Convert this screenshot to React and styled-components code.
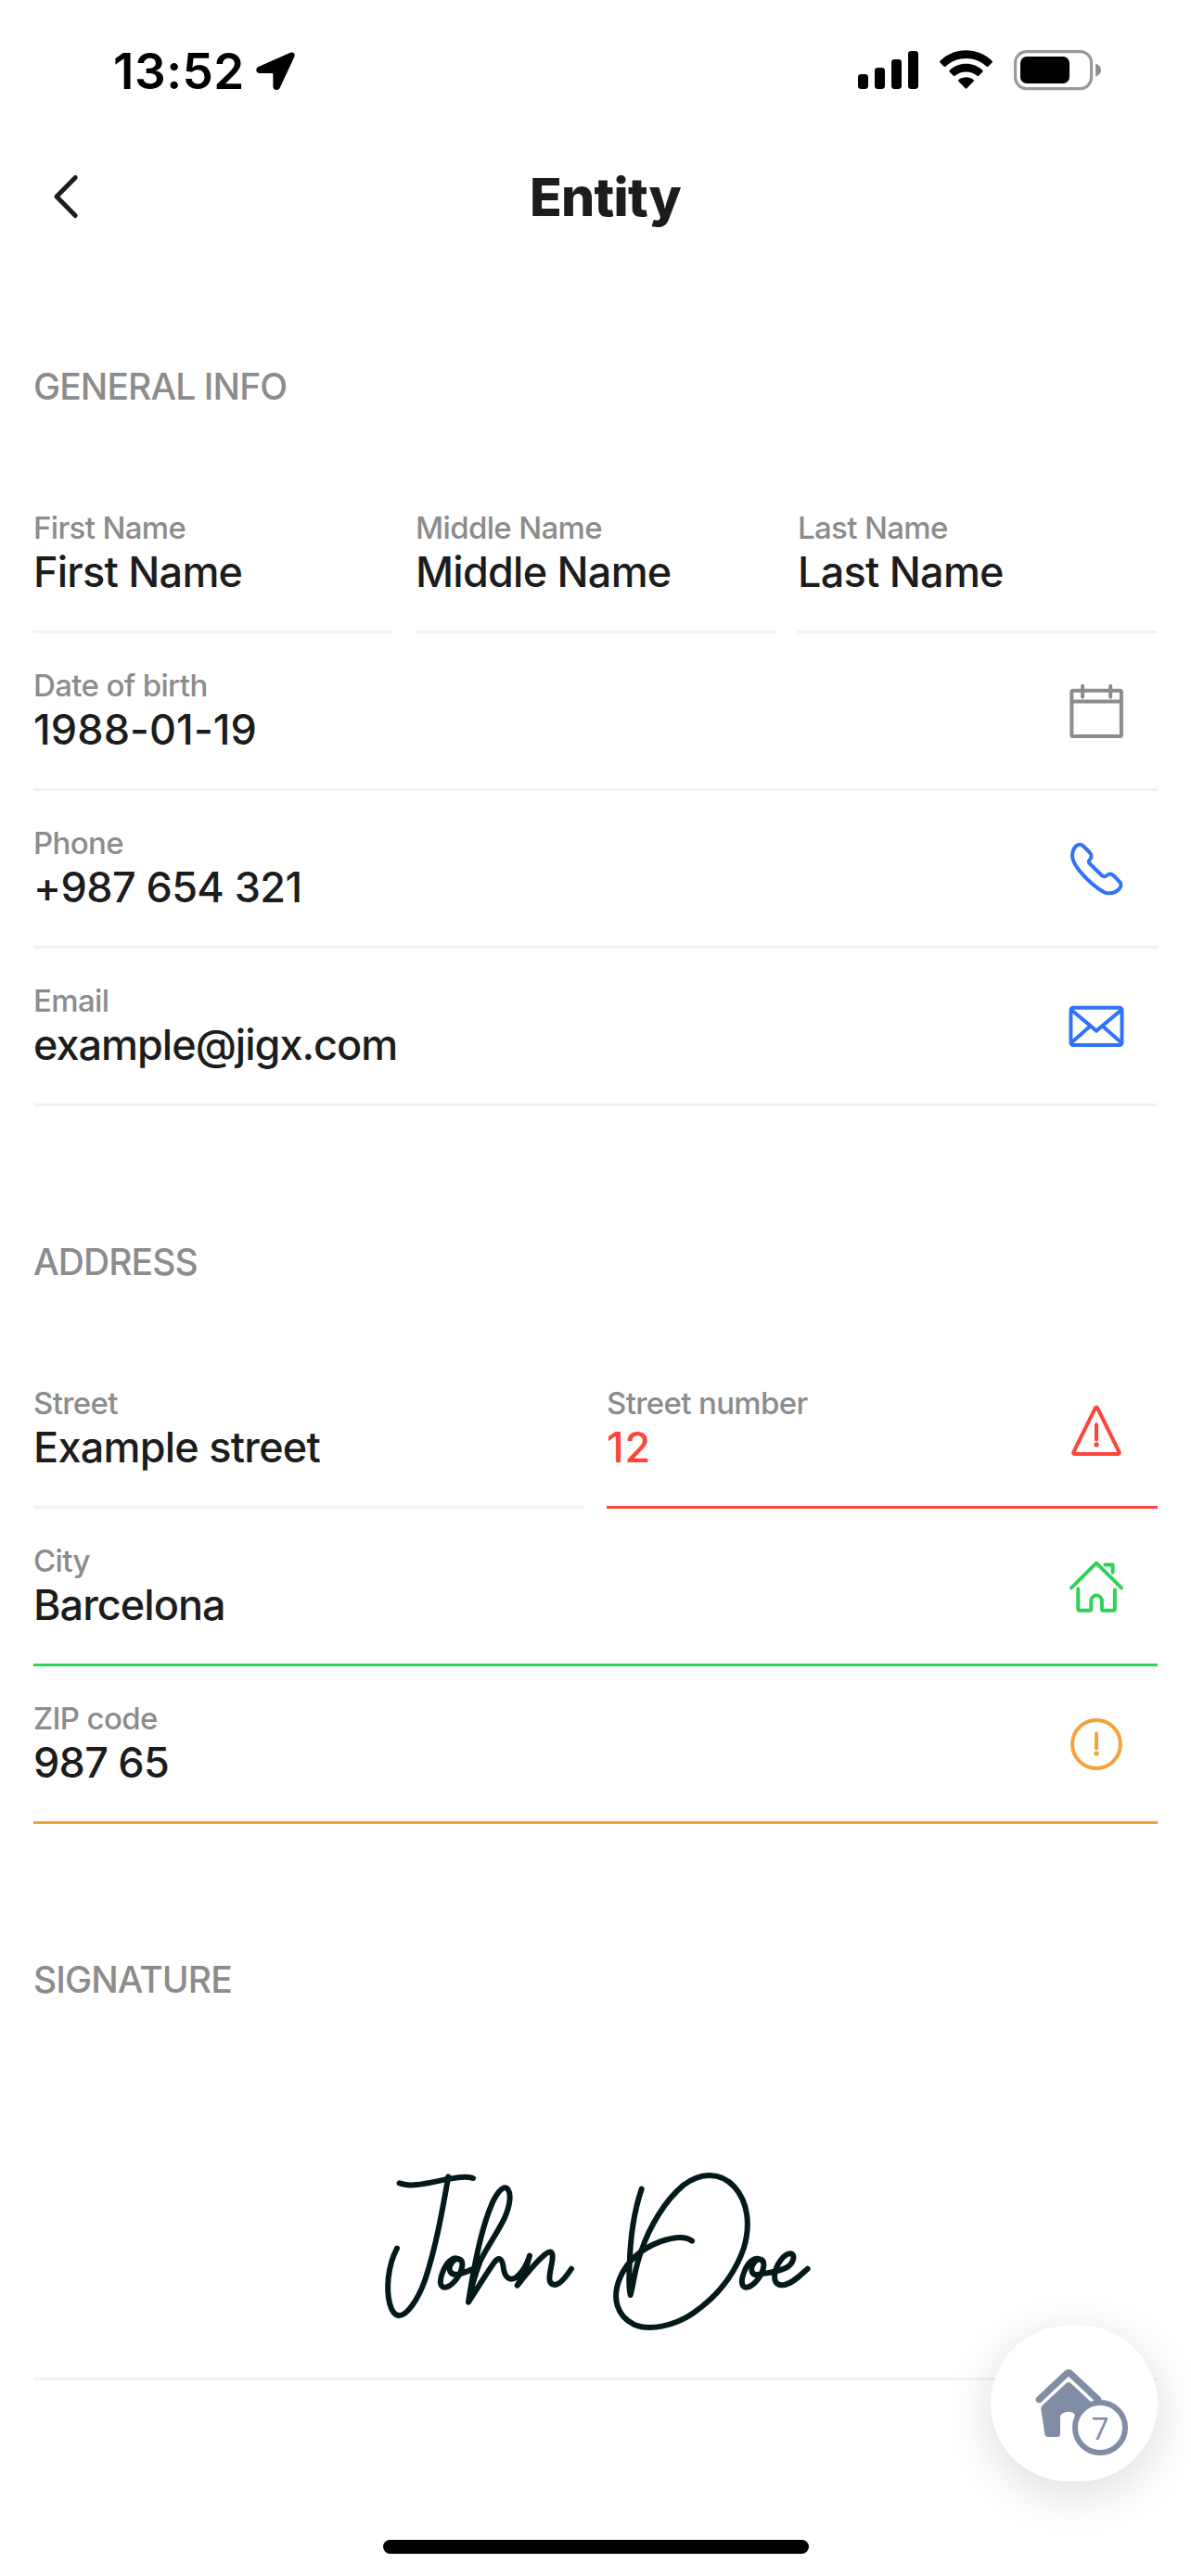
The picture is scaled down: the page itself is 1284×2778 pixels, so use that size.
import React from 'react';
import styled, { createGlobalStyle } from 'styled-components';

const color = {
  ink: '#1c1c1c',
  muted: '#8c8c8c',
  line: '#f2f2f2',
  blue: '#3173f6',
  red: '#ff453a',
  green: '#30d158',
  orange: '#f2a33a',
  slate: '#7f8da5',
  signature: '#04191a',
};

const GlobalStyle = createGlobalStyle`
  body {
    margin: 0;
    background: #fff;
  }
`;

const Screen = styled.div`
  position: relative;
  display: flex;
  flex-direction: column;
  width: 1284px;
  height: 2778px;
  overflow: hidden;
  background: #fff;
  color: ${color.ink};
  font-family: Inter, 'Liberation Sans', sans-serif;
`;

const StatusBar = styled.header`
  display: flex;
  justify-content: space-between;
  height: 141px;
  box-sizing: border-box;
  padding: 45px 96px 0 122px;
  color: #000;
`;

const StatusLeft = styled.div`
  display: flex;
  gap: 11px;
`;

const Time = styled.span`
  width: 143px;
  font-size: 53px;
  line-height: 64px;
  font-weight: 600;
  letter-spacing: 0.5px;
  white-space: nowrap;
`;

const StatusRight = styled.div`
  display: flex;
  gap: 23px;
  padding-top: 9px;
`;

const Glyph = styled.svg`
  display: block;
  flex: none;
  overflow: visible;
`;

const ArrowSlot = styled.div`
  padding-top: 11px;
`;

const NavBar = styled.nav`
  display: grid;
  grid-template-columns: 107px 1fr 86px;
  align-items: center;
  height: 143px;
`;

const BackButton = styled.button`
  display: flex;
  align-items: center;
  height: 100%;
  padding: 0 0 1px 57px;
  border: 0;
  background: none;
`;

const Title = styled.h1`
  margin: 0;
  text-align: center;
  font-size: 57px;
  line-height: 69px;
  font-weight: 800;
  letter-spacing: -0.7px;
`;

const Content = styled.main`
  display: flex;
  flex-direction: column;
  gap: 144px;
  padding: 109px 36px 0;
`;

const Section = styled.section`
  display: flex;
  flex-direction: column;
`;

const SectionTitle = styled.h2`
  margin: 0 0 72px;
  font-size: 39px;
  line-height: 48px;
  font-weight: 450;
  letter-spacing: -0.9px;
  color: ${color.muted};
`;

const Row = styled.div`
  display: grid;
  grid-template-columns: repeat(${(p) => p.$columns || 1}, 1fr);
  column-gap: 24px;
`;

const FieldBox = styled.div`
  display: flex;
  justify-content: space-between;
  height: 170px;
  box-sizing: border-box;
  padding: 36px 36px 0 0;
  border-bottom: 3px solid ${(p) => p.$line || color.line};
`;

const FieldText = styled.div`
  display: flex;
  flex-direction: column;
`;

const Label = styled.span`
  font-size: 33px;
  line-height: 40px;
  font-weight: 450;
  letter-spacing: -0.65px;
  color: ${color.muted};
  white-space: nowrap;
`;

const Value = styled.span`
  font-size: 45px;
  line-height: 55px;
  font-weight: 470;
  letter-spacing: ${(p) => p.$tracking || '-0.75px'};
  color: ${(p) => p.$color || color.ink};
  white-space: nowrap;
`;

const IconSlot = styled.div`
  width: 60px;
  height: 60px;
  padding-top: 17px;
  color: ${(p) => p.$color};
`;

const SignatureBox = styled.div`
  display: flex;
  justify-content: center;
  height: 336px;
  box-sizing: border-box;
  padding: 79px 4px 0 0;
  border-bottom: 3px solid ${color.line};
`;

const HomeButton = styled.button`
  position: absolute;
  left: 1068px;
  top: 2508px;
  width: 180px;
  height: 168px;
  padding: 0;
  border: 0;
  border-radius: 84px;
  background: #fff;
  box-shadow: 0 12px 54px rgba(0, 0, 0, 0.14);
`;

const HomeGlyph = styled(Glyph)`
  position: absolute;
  left: 0;
  top: 0;
`;

const Badge = styled.span`
  position: absolute;
  left: 88px;
  top: 80px;
  display: flex;
  align-items: center;
  justify-content: center;
  width: 60px;
  height: 60px;
  box-sizing: border-box;
  border: 6px solid ${color.slate};
  border-radius: 50%;
  background: #fff;
  color: ${color.slate};
  font-family: 'Open Sans', 'Noto Sans', sans-serif;
  font-size: 33.5px;
  line-height: 48px;
`;

const HomeIndicator = styled.div`
  position: absolute;
  left: 413px;
  bottom: 24px;
  width: 459px;
  height: 15px;
  border-radius: 8px;
  background: #000;
`;

function LineIcon({ children }) {
  return (
    <Glyph
      width="60"
      height="60"
      viewBox="0 0 60 60"
      fill="none"
      stroke="currentColor"
      strokeWidth="4"
      strokeLinecap="round"
      strokeLinejoin="round"
    >
      {children}
    </Glyph>
  );
}

const CalendarIcon = () => (
  <LineIcon>
    <rect x="3.4" y="8.7" width="53.5" height="49.3" rx="1.6" />
    <path d="M3.4 20.5H56.9M15.1 3.8V15.4M45.2 3.8V15.4" />
  </LineIcon>
);

const PhoneIcon = () => (
  <LineIcon>
    <path d="M4 16.7C4 11.5 5.5 9 8.5 6C10.8 4.2 13.8 4.2 16 6.5L23 13.5C25.3 16 24.6 19.3 23.2 20.7C21.6 22.3 21.6 24 23 25.5L35.5 37.8C37.5 39.6 39.8 39.4 41.4 38C43.6 36.2 46 36 48.3 38L55 44.8C57 47 57 50 54.8 52.3C51 56.5 47.5 57.5 42.5 57.2C37 57 30 51.5 20 42C9 31 4 22.5 4 16.7Z" />
  </LineIcon>
);

const MailIcon = () => (
  <LineIcon>
    <rect x="2.5" y="10.7" width="55" height="40.3" rx="2.6" />
    <path d="M3.2 13.2L30 35.6L56.8 13.2M22.6 31.2L3.2 48.2M37.4 31.2L56.8 48.2" />
  </LineIcon>
);

const WarningIcon = () => (
  <LineIcon>
    <path d="M28.9 8.3Q30 6.6 31.1 8.3L54.6 56Q55.2 57.9 53.4 57.9H6.6Q4.8 57.9 5.4 56Z" />
    <path d="M30 26.2V42.4" />
    <circle cx="30" cy="47.9" r="2.6" fill="currentColor" stroke="none" />
  </LineIcon>
);

const HouseIcon = () => (
  <LineIcon>
    <path d="M3 32.4L30 5.6L57 32.4M39.3 7.4H47.6V15.8" />
    <path d="M10.3 33.4V55Q10.3 56.7 12 56.7H22.7Q24.3 56.7 24.3 55V46.4A5.8 5.8 0 0 1 35.9 46.4V55Q35.9 56.7 37.5 56.7H48.2Q49.9 56.7 49.9 55V34.5" />
  </LineIcon>
);

const AlertCircleIcon = () => (
  <LineIcon>
    <circle cx="30" cy="31" r="25.9" />
    <path d="M30 19.4V35.6" />
    <circle cx="30" cy="41" r="2.6" fill="currentColor" stroke="none" />
  </LineIcon>
);

const LocationArrow = () => (
  <Glyph width="42" height="42" viewBox="0 0 42 42" fill="currentColor">
    <path d="M36.5 1C39.7 -0.7 42.6 1.7 41.4 5.2L25.7 38.8C24 42.4 18.4 41.5 18.4 37.2V23.9Q18.4 23 17.5 23H4.2C0 23-1.3 17.8 2.6 15.9Z" />
  </Glyph>
);

const SignalIcon = () => (
  <Glyph width="65" height="43" viewBox="0 0 65 43" fill="currentColor">
    <rect x="0" y="26" width="11" height="16" rx="3.4" />
    <rect x="18" y="19" width="11" height="23" rx="3.4" />
    <rect x="36" y="10" width="11" height="32" rx="3.4" />
    <rect x="54" y="1" width="11" height="41" rx="3.4" />
  </Glyph>
);

const WifiIcon = () => (
  <Glyph width="57" height="43" viewBox="0.5 0 57 43" fill="currentColor">
    <path d="M29 0.3C39.5 0.3 49.5 4.4 57 11.7Q57.9 12.6 57 13.5L52.8 17.7Q52 18.5 51.1 17.7C45.2 12.1 37.3 9 29 9C20.7 9 12.8 12.1 6.9 17.7Q6 18.5 5.2 17.7L1 13.5Q0.1 12.6 1 11.7C8.5 4.4 18.5 0.3 29 0.3Z" />
    <path d="M29 14.8C35.6 14.8 41.9 17.3 46.7 21.7Q47.7 22.6 46.8 23.5L42.6 27.7Q41.8 28.5 40.9 27.7C37.6 24.9 33.4 23.4 29 23.4C24.6 23.4 20.4 24.9 17.1 27.7Q16.2 28.5 15.4 27.7L11.2 23.5Q10.3 22.6 11.3 21.7C16.1 17.3 22.4 14.8 29 14.8Z" />
    <path d="M29 29.2C32 29.2 34.7 30.2 37 31.9Q38 32.7 37.1 33.7L29.8 41.3Q29 42.1 28.2 41.3L20.9 33.7Q20 32.7 21 31.9C23.3 30.2 26 29.2 29 29.2Z" />
  </Glyph>
);

const BatteryIcon = () => (
  <Glyph width="95" height="43" viewBox="0 0 95 43">
    <rect x="1.6" y="1.6" width="82" height="40" rx="12" fill="none" stroke="#999" strokeWidth="3.2" />
    <rect x="7" y="7" width="53" height="29" rx="7" fill="#000" />
    <path d="M88.2 14.5C91.5 15.7 94 18.3 94 21.6C94 24.9 91.5 27.5 88.2 28.7Z" fill="#8c8c8c" />
  </Glyph>
);

const BackChevron = () => (
  <Glyph width="28" height="50" viewBox="0 0 28 50" fill="none" stroke={color.ink} strokeWidth="5" strokeLinecap="round" strokeLinejoin="round">
    <path d="M24.2 4.5L4 25L24.2 45.5" />
  </Glyph>
);

const Signature = () => (
  <Glyph
    width="500"
    height="230"
    viewBox="0 0 1500 690"
    fill="none"
    stroke={color.signature}
    strokeWidth="18"
    strokeLinecap="round"
    strokeLinejoin="round"
    role="img"
    aria-label="John Doe"
  >
    <path d="M122 133C160 150 230 128 290 118C320 112 345 112 360 117" />
    <path d="M280 112C262 215 240 340 205 445C180 515 145 562 120 562C92 558 80 500 86 440C90 405 100 370 114 344" />
    <path d="M322 384C300 364 275 385 262 420C248 455 255 475 275 469C300 460 322 425 325 400C328 375 305 370 290 392C278 412 285 432 310 428C330 424 350 415 366 408" />
    <path d="M345 518C360 420 385 290 415 215C432 170 455 140 470 150C485 165 480 205 462 245C440 292 408 335 383 385C370 420 352 480 345 518C370 480 400 430 428 390C445 368 455 380 458 405C462 440 480 452 502 436C520 420 535 395 543 368C535 400 518 440 503 464C530 430 565 385 595 362C620 343 620 370 613 400C605 440 602 460 625 462C645 460 665 430 678 410" />
    <path d="M905 152C880 225 868 320 866 400C864 440 864 475 869 495C880 455 882 410 905 350C930 275 980 190 1040 140C1095 98 1160 95 1205 145C1250 195 1258 270 1235 345C1205 430 1150 500 1070 555C1010 595 930 612 880 590C825 562 808 505 835 440C858 385 905 345 965 322C1000 310 1045 302 1068 320" />
    <path d="M1298 386C1275 365 1250 385 1237 420C1223 455 1230 475 1250 469C1275 460 1297 425 1300 402C1302 375 1280 372 1266 394C1255 415 1262 434 1285 428C1310 424 1345 420 1370 408C1395 396 1405 365 1388 361C1365 360 1340 398 1336 425C1332 455 1345 466 1368 462C1395 456 1420 430 1442 410" />
  </Glyph>
);

function Field({ label, value, valueColor, tracking, line, icon, iconColor }) {
  return (
    <FieldBox $line={line}>
      <FieldText>
        <Label>{label}</Label>
        <Value $color={valueColor} $tracking={tracking}>
          {value}
        </Value>
      </FieldText>
      {icon && <IconSlot $color={iconColor}>{icon}</IconSlot>}
    </FieldBox>
  );
}

export default function App() {
  return (
    <>
      <GlobalStyle />
      <Screen>
        <StatusBar>
          <StatusLeft>
            <Time>13:52</Time>
            <ArrowSlot>
              <LocationArrow />
            </ArrowSlot>
          </StatusLeft>
          <StatusRight>
            <SignalIcon />
            <WifiIcon />
            <BatteryIcon />
          </StatusRight>
        </StatusBar>

        <NavBar>
          <BackButton aria-label="Back">
            <BackChevron />
          </BackButton>
          <Title>Entity</Title>
        </NavBar>

        <Content>
          <Section>
            <SectionTitle>GENERAL INFO</SectionTitle>
            <Row $columns={3}>
              <Field label="First Name" value="First Name" />
              <Field label="Middle Name" value="Middle Name" />
              <Field label="Last Name" value="Last Name" />
            </Row>
            <Row>
              <Field
                label="Date of birth"
                value="1988-01-19"
                tracking="0.1px"
                icon={<CalendarIcon />}
                iconColor={color.muted}
              />
            </Row>
            <Row>
              <Field label="Phone" value="+987 654 321" tracking="-0.6px" icon={<PhoneIcon />} iconColor={color.blue} />
            </Row>
            <Row>
              <Field
                label="Email"
                value="example@jigx.com"
                tracking="-1px"
                icon={<MailIcon />}
                iconColor={color.blue}
              />
            </Row>
          </Section>

          <Section>
            <SectionTitle>ADDRESS</SectionTitle>
            <Row $columns={2}>
              <Field label="Street" value="Example street" />
              <Field
                label="Street number"
                value="12"
                valueColor={color.red}
                tracking="0.8px"
                line={color.red}
                icon={<WarningIcon />}
                iconColor={color.red}
              />
            </Row>
            <Row>
              <Field
                label="City"
                value="Barcelona"
                tracking="-0.95px"
                line={color.green}
                icon={<HouseIcon />}
                iconColor={color.green}
              />
            </Row>
            <Row>
              <Field label="ZIP code" value="987 65" line={color.orange} icon={<AlertCircleIcon />} iconColor={color.orange} />
            </Row>
          </Section>

          <Section>
            <SectionTitle>SIGNATURE</SectionTitle>
            <SignatureBox>
              <Signature />
            </SignatureBox>
          </Section>
        </Content>

        <HomeButton aria-label="Home">
          <HomeGlyph width="180" height="168" viewBox="102 114 540 504">
            <path
              d="M259 353L346 271Q354 263 362 271L449 353"
              fill="none"
              stroke={color.slate}
              strokeWidth="22"
              strokeLinecap="round"
              strokeLinejoin="round"
            />
            <path
              d="M347 300Q354 294 361 300L436 370L436 460H376V406Q372 393 355 393C338 393 327 400 327 412V464Q327 474 317 474H287Q278 474 277 465L265 385Q264 377 270 371Z"
              fill={color.slate}
            />
          </HomeGlyph>
          <Badge>7</Badge>
        </HomeButton>
        <HomeIndicator />
      </Screen>
    </>
  );
}
